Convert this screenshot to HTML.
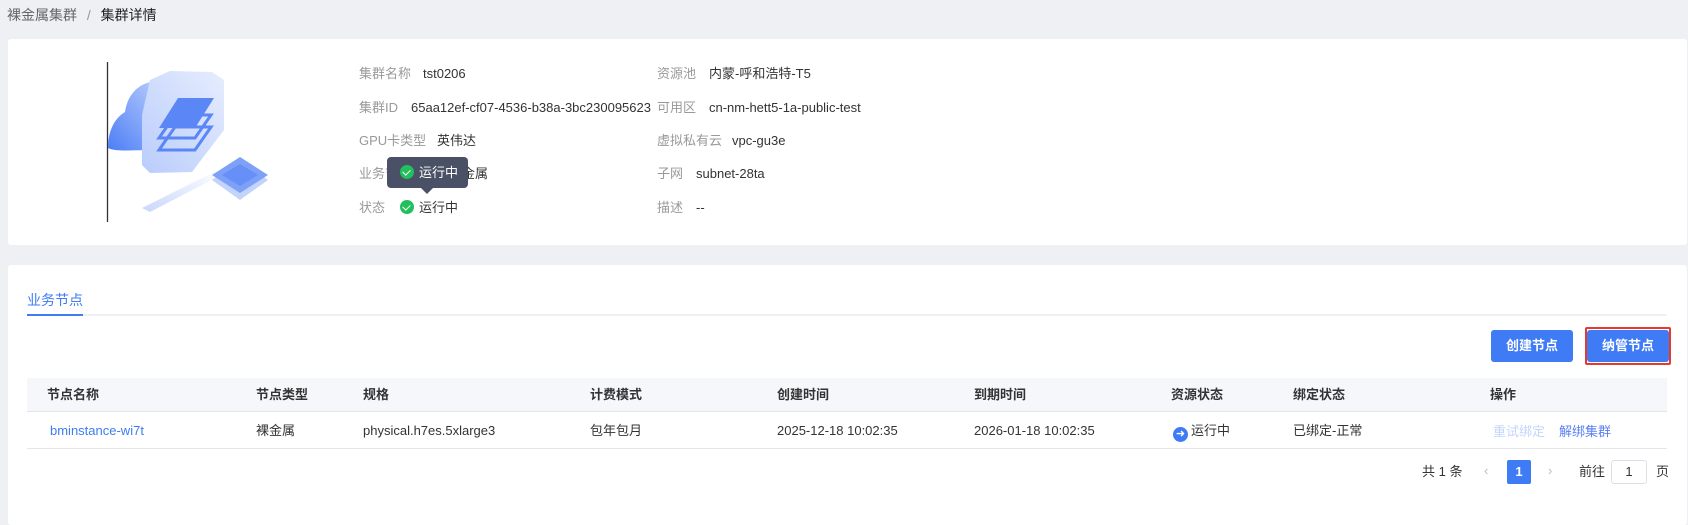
<!DOCTYPE html>
<html><head><meta charset="utf-8"><style>
*{margin:0;padding:0;box-sizing:border-box}
body{width:1688px;height:504px;background:#eef0f4;font-family:"Liberation Sans","Noto Sans CJK SC",sans-serif;font-size:13px;color:#333;position:relative;overflow:hidden}
.a{position:absolute;white-space:nowrap;line-height:16px}
.card{position:absolute;background:#fff;border-radius:3px}
.lb{color:#999}
.th{font-weight:bold;color:#333}
.btn{position:absolute;background:#3e7bf5;color:#fff;font-weight:bold;border-radius:3px;text-align:center;line-height:32px;font-size:13px}
.ok{display:inline-block;width:14px;height:14px;border-radius:50%;background:#22c05d;vertical-align:-2px;margin-right:5px;position:relative}
.ok:after{content:"";position:absolute;left:4px;top:3px;width:4px;height:6px;border:solid #fff;border-width:0 1.5px 1.5px 0;transform:rotate(45deg)}
</style></head><body>
<div class="a" style="left:7px;top:7px;font-size:14px;color:#666">裸金属集群 <span style="margin:0 6px;color:#999">/</span> <span style="color:#222">集群详情</span></div>

<div class="card" style="left:8px;top:39px;width:1679px;height:206px"></div>
<div class="card" style="left:8px;top:265px;width:1679px;height:260px"></div>

<svg style="position:absolute;left:0;top:0" width="300" height="240">
<defs>
<linearGradient id="g1" x1="0" y1="1" x2="1" y2="0"><stop offset="0" stop-color="#4c7ef6"/><stop offset="1" stop-color="#c9d8fd"/></linearGradient>
<linearGradient id="g2" x1="0" y1="1" x2="1" y2="0"><stop offset="0" stop-color="#b9ccfb"/><stop offset="1" stop-color="#e6edfe"/></linearGradient>
<linearGradient id="g3" x1="0" y1="1" x2="1" y2="0"><stop offset="0" stop-color="#c9d7fb"/><stop offset="1" stop-color="#ffffff"/></linearGradient>
</defs>
<line x1="107.5" y1="62" x2="107.5" y2="222" stroke="#333" stroke-width="1.3"/>
<path d="M108 148 C108 130 115 118 125 112 C128 90 145 80 158 82 C163 76 170 76 172 80 L150 150 C135 150 115 152 108 148 Z" fill="url(#g1)"/>
<path d="M150 80 L170 71 L212 72 L224 80 L224 130 L192 172 L150 173 L142 165 L142 115 Z" fill="url(#g2)"/>
<path d="M159 128 L178 98 L214 98 L195 128 Z" fill="#5a86f6"/>
<path d="M159 138 L175 115 L211 115 L195 138 Z" fill="none" stroke="#5a86f6" stroke-width="3"/>
<path d="M159 150 L175 127 L211 127 L195 150 Z" fill="none" stroke="#5a86f6" stroke-width="3"/>
<path d="M142 208 L218 170 L225 173 L150 212 Z" fill="url(#g3)"/>
<path d="M212 180 L240 160 L268 180 L240 200 Z" fill="#c3d3fc"/>
<path d="M212 175 L240 157 L268 175 L240 193 Z" fill="#7da0f8"/>
<path d="M222 175 L240 164 L258 175 L240 186 Z" fill="#6690f7"/>
</svg>

<div class="a lb" style="left:359px;top:66px">集群名称</div><div class="a" style="left:423px;top:66px">tst0206</div>
<div class="a lb" style="left:359px;top:100px">集群ID</div><div class="a" style="left:411px;top:100px">65aa12ef-cf07-4536-b38a-3bc230095623</div>
<div class="a lb" style="left:359px;top:133px">GPU卡类型</div><div class="a" style="left:437px;top:133px">英伟达</div>
<div class="a lb" style="left:359px;top:166px">业务节点类型</div><div class="a" style="left:449px;top:166px">裸金属</div>
<div class="a lb" style="left:359px;top:200px">状态</div><div class="a" style="left:400px;top:200px"><span class="ok"></span>运行中</div>

<div class="a" style="left:387px;top:157px;width:81px;height:31px;background:#4a5166;border-radius:4px;color:#fff;padding:8px 0 0 13px"><span class="ok"></span>运行中</div>
<div style="position:absolute;left:421px;top:188px;width:0;height:0;border:6px solid transparent;border-top-color:#4a5166;border-bottom:0"></div>

<div class="a lb" style="left:657px;top:66px">资源池</div><div class="a" style="left:709px;top:66px">内蒙-呼和浩特-T5</div>
<div class="a lb" style="left:657px;top:100px">可用区</div><div class="a" style="left:709px;top:100px">cn-nm-hett5-1a-public-test</div>
<div class="a lb" style="left:657px;top:133px">虚拟私有云</div><div class="a" style="left:732px;top:133px">vpc-gu3e</div>
<div class="a lb" style="left:657px;top:166px">子网</div><div class="a" style="left:696px;top:166px">subnet-28ta</div>
<div class="a lb" style="left:657px;top:200px">描述</div><div class="a" style="left:696px;top:200px">--</div>

<div class="a" style="left:27px;top:292px;font-size:14px;color:#3e7bf5">业务节点</div>
<div style="position:absolute;left:27px;top:314px;width:1640px;height:2px;background:#eef0f3"></div>
<div style="position:absolute;left:27px;top:314px;width:56px;height:2px;background:#3e7bf5"></div>

<div class="btn" style="left:1491px;top:330px;width:82px">创建节点</div>
<div style="position:absolute;left:1585px;top:327px;width:86px;height:38px;border:2px solid #e8392f;border-radius:2px"></div>
<div class="btn" style="left:1587px;top:330px;width:82px">纳管节点</div>

<div style="position:absolute;left:27px;top:378px;width:1640px;height:34px;background:#f5f7fa;border-bottom:1px solid #e3e6ec"></div>
<div style="position:absolute;left:27px;top:448px;width:1640px;height:1px;background:#e3e6ec"></div>
<div class="a th" style="left:47px;top:387px">节点名称</div>
<div class="a th" style="left:256px;top:387px">节点类型</div>
<div class="a th" style="left:363px;top:387px">规格</div>
<div class="a th" style="left:590px;top:387px">计费模式</div>
<div class="a th" style="left:777px;top:387px">创建时间</div>
<div class="a th" style="left:974px;top:387px">到期时间</div>
<div class="a th" style="left:1171px;top:387px">资源状态</div>
<div class="a th" style="left:1293px;top:387px">绑定状态</div>
<div class="a th" style="left:1490px;top:387px">操作</div>

<div class="a" style="left:50px;top:423px;color:#3e7bf5">bminstance-wi7t</div>
<div class="a" style="left:256px;top:423px">裸金属</div>
<div class="a" style="left:363px;top:423px">physical.h7es.5xlarge3</div>
<div class="a" style="left:590px;top:423px">包年包月</div>
<div class="a" style="left:777px;top:423px">2025-12-18 10:02:35</div>
<div class="a" style="left:974px;top:423px">2026-01-18 10:02:35</div>
<div class="a" style="left:1173px;top:423px"><span style="display:inline-block;width:15px;height:15px;border-radius:50%;background:#3e7bf5;color:#fff;font-size:11px;line-height:15px;text-align:center;vertical-align:-2px;margin-right:3px">➜</span>运行中</div>
<div class="a" style="left:1293px;top:423px">已绑定-正常</div>
<div class="a" style="left:1493px;top:424px;color:#c3d5fb">重试绑定</div>
<div class="a" style="left:1559px;top:424px;color:#5a7ff5">解绑集群</div>

<div class="a" style="left:1422px;top:464px">共 1 条</div>
<div class="a" style="left:1484px;top:463px;color:#bbb">‹</div>
<div style="position:absolute;left:1507px;top:460px;width:24px;height:24px;background:#3e7bf5;border-radius:2px;color:#fff;text-align:center;line-height:24px;font-weight:bold">1</div>
<div class="a" style="left:1548px;top:463px;color:#bbb">›</div>
<div class="a" style="left:1579px;top:464px">前往</div>
<div style="position:absolute;left:1611px;top:460px;width:36px;height:24px;border:1px solid #dcdfe6;border-radius:3px;text-align:center;line-height:22px">1</div>
<div class="a" style="left:1656px;top:464px">页</div>
</body></html>
